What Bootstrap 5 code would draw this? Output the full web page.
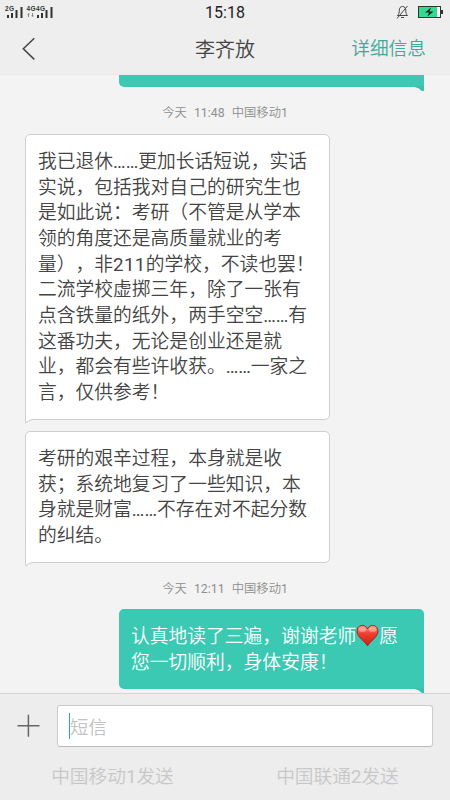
<!DOCTYPE html>
<html lang="zh-CN">
<head>
<meta charset="utf-8">
<meta name="viewport" content="width=device-width, initial-scale=1">
<title>李齐放</title>
<link href="https://cdn.jsdelivr.net/npm/bootstrap@5.3.0/dist/css/bootstrap.min.css" rel="stylesheet">
<style>
body{font-family:Roboto,"Noto Sans CJK SC",sans-serif;font-weight:350;background:#f3f3f3;color:#444;height:800px;overflow:hidden;text-spacing-trim:space-all}
.phone{width:450px;height:800px}
.topbar{height:75px;background:#eeeeee;border-bottom:1px solid #e9e9e9}
.status{height:24px}
.clock{font:400 16px/25px Roboto,sans-serif;color:#222}
.titlebar{height:48px}
.side{width:110px}
.contact{font-size:20px;line-height:52px}
.detail{font-size:18.7px;line-height:51px;color:#40a99b;white-space:nowrap}
.thread{height:618px}
.stamp{font-size:12.3px;line-height:20px;height:18px;color:#8e8e8e;word-spacing:4.2px;text-align:center;white-space:pre}
.bubble{width:305px;border-radius:5px;font-size:18.78px;line-height:25.65px;padding:15px 12px 0 12px;white-space:nowrap}
.recv{margin-left:25px;background:#fff;border:1px solid #cfcfcf;color:#444}
.sent{margin-left:119px;padding-top:16px;background:#3cc9b4;color:#fff;border-bottom-right-radius:0}
.recv{border-bottom-left-radius:0}
.recv svg{left:-1px;bottom:-5px}
.sent .tail{right:0;bottom:-4px}
.reg{font-weight:400}
.num{letter-spacing:.3px}
.heart{width:23px;height:23px;margin:-6px 0;vertical-align:2px}
.composer{height:107px;background:#ededed;border-top:1px solid #d6d6d6}
.composer .entry-row{padding-top:11px}
.entry{width:376px;height:42px;border:1px solid #cbcbcb;border-bottom-color:#bbb;border-radius:3px;background:#fff;font-size:18.4px;color:#c2c2c2;padding-left:11px}
.entry .hint{line-height:28px;padding-top:3px}
.caret{width:1px;height:26px;background:#22b39c}
.send{font-size:18.7px;line-height:28px;color:#c8c8c8;width:225px;white-space:nowrap}
</style>
<script src="https://cdn.jsdelivr.net/npm/bootstrap@5.3.0/dist/js/bootstrap.bundle.min.js"></script>
</head>
<body>
<div class="phone d-flex flex-column position-relative">
  <header class="topbar flex-shrink-0">
    <div class="status d-flex justify-content-between">
      <div class="side">
        <svg width="60" height="24" viewBox="0 0 60 24" fill="#333" font-family="Liberation Sans" font-weight="700" font-size="6.5">
          <text x="5" y="10" textLength="9">2G</text><path d="M7 14h2v3H7zM11 12h2v5h-2zM15.500 9h2v8h-2zM20.500 6h2v11h-2z"/>
          <text x="26.500" y="10" textLength="9">4G</text><text x="36" y="10" textLength="9">4G</text>
          <path d="M37 14h2v3h-2zM41 12h2v5h-2zM45.500 9h2v8h-2zM50.500 6h2v11h-2z"/>
          <path d="M27 13.500l1.500-1.500 1.500 1.500h-1V16h-1v-2.500zM31 14.500h1V12h1v2.500h1L32.500 16z" fill="#888"/>
        </svg>
      </div>
      <div class="clock">15:18</div>
      <div class="side text-end">
        <svg width="60" height="24" viewBox="0 0 60 24">
          <g fill="none" stroke="#444" stroke-width="1"><path d="M7.500 14.500h10c-1.500-1.500-1.700-3-1.700-5 0-2.500-1.200-4-3.300-4S9.300 7 9.300 9.500c0 2-.3 3.500-1.800 5zM11 16.500h3M17.500 5L7 17.500"/></g>
          <rect x="28.500" y="5.500" width="22" height="11" fill="#fff" stroke="#333"/><rect x="29" y="6" width="18" height="10" fill="#31dc91"/><path d="M51 9h2v4h-2z" fill="#333"/>
          <path d="M41 6.500l-6 5h4l-1.500 4 6-5h-4z" fill="#222"/>
        </svg>
      </div>
    </div>
    <div class="titlebar d-flex justify-content-between">
      <div class="side d-flex align-items-center"><svg width="50" height="48" viewBox="0 0 50 48" fill="none" stroke="#444" stroke-width="1.500"><path d="M34.300 14.200L23.300 24.700l11 10.700"/></svg></div>
      <div class="contact">李齐放</div>
      <div class="side d-flex justify-content-end detail pe-4"><span>详细信息</span></div>
    </div>
  </header>

  <main class="thread flex-shrink-0">
    <div class="bubble sent position-relative p-0" style="height:12px;border-top-left-radius:0;border-top-right-radius:0">
      <svg class="tail position-absolute" width="9" height="5" viewBox="0 0 9 5"><path d="M0 0h9v5H7Q4 2 0 1z" fill="#3cc0ad"/></svg>
    </div>
    <div class="stamp" style="margin-top:16px">今天 <span class="reg">11:48</span> 中国移动<span class="reg">1</span></div>
    <div class="bubble recv position-relative" style="margin-top:13px;height:286px">
      我已退休<span class="reg">……</span>更加长话短说，实话<br>实说，包括我对自己的研究生也<br>是如此说：考研（不管是从学本<br>领的角度还是高质量就业的考<br>量），非<span class="reg num">211</span>的学校，不读也罢！<br>二流学校虚掷三年，除了一张有<br>点含铁量的纸外，两手空空<span class="reg">……</span>有<br>这番功夫，无论是创业还是就<br>业，都会有些许收获。<span class="reg">……</span>一家之<br>言，仅供参考！
      <svg class="position-absolute" width="8" height="6" viewBox="0 0 8 6"><path d="M.5 0v5Q4 1.500 8 1.500V0z" fill="#fff"/><path d="M.5 0v5Q4 1.500 8 1.500" fill="none" stroke="#cfcfcf"/></svg>
    </div>
    <div class="bubble recv position-relative" style="margin-top:11px;height:132px">
      考研的艰辛过程，本身就是收<br>获；系统地复习了一些知识，本<br>身就是财富<span class="reg">……</span>不存在对不起分数<br>的纠结。
      <svg class="position-absolute" width="8" height="6" viewBox="0 0 8 6"><path d="M.5 0v5Q4 1.500 8 1.500V0z" fill="#fff"/><path d="M.5 0v5Q4 1.500 8 1.500" fill="none" stroke="#cfcfcf"/></svg>
    </div>
    <div class="stamp" style="margin-top:16px">今天 <span class="reg">12:11</span> 中国移动<span class="reg">1</span></div>
    <div class="bubble sent position-relative" style="margin-top:12px;height:80px">
      认真地读了三遍，谢谢老师<svg class="heart" viewBox="0 0 23 23"><defs><linearGradient id="red" x2="0" y2="1"><stop offset="0" stop-color="#ff9a88"/><stop offset=".4" stop-color="#ee4030"/><stop offset="1" stop-color="#c81e12"/></linearGradient></defs><path d="M11.500 22C9 17 1 13.500 1 7c0-6 8-8 10.500-2C14 -1 22 1 22 7c0 6.500-8 10-10.500 15z" fill="url(#red)" stroke="#a8261c" stroke-width="1"/><ellipse cx="6.500" cy="5.500" rx="3.800" ry="2.300" fill="#fff" opacity=".35"/><ellipse cx="16.500" cy="5.500" rx="3.800" ry="2.300" fill="#fff" opacity=".35"/></svg>愿<br>您一切顺利，身体安康！
      <svg class="tail position-absolute" width="9" height="5" viewBox="0 0 9 5"><path d="M0 0h9v5H7Q4 2 0 1z" fill="#3cc0ad"/></svg>
    </div>
  </main>

  <footer class="composer flex-shrink-0">
    <div class="entry-row d-flex">
      <svg width="57" height="42" viewBox="0 0 57 42" stroke="#666" stroke-width="1.500" fill="none"><path d="M17.500 20.700h22M28.400 9.700v22"/></svg>
      <div class="entry d-flex align-items-center"><span class="caret flex-shrink-0"></span><span class="hint">短信</span></div>
    </div>
    <div class="d-flex text-center mt-3">
      <div class="send">中国移动<span class="reg">1</span>发送</div>
      <div class="send">中国联通<span class="reg">2</span>发送</div>
    </div>
  </footer>
</div>
</body>
</html>
